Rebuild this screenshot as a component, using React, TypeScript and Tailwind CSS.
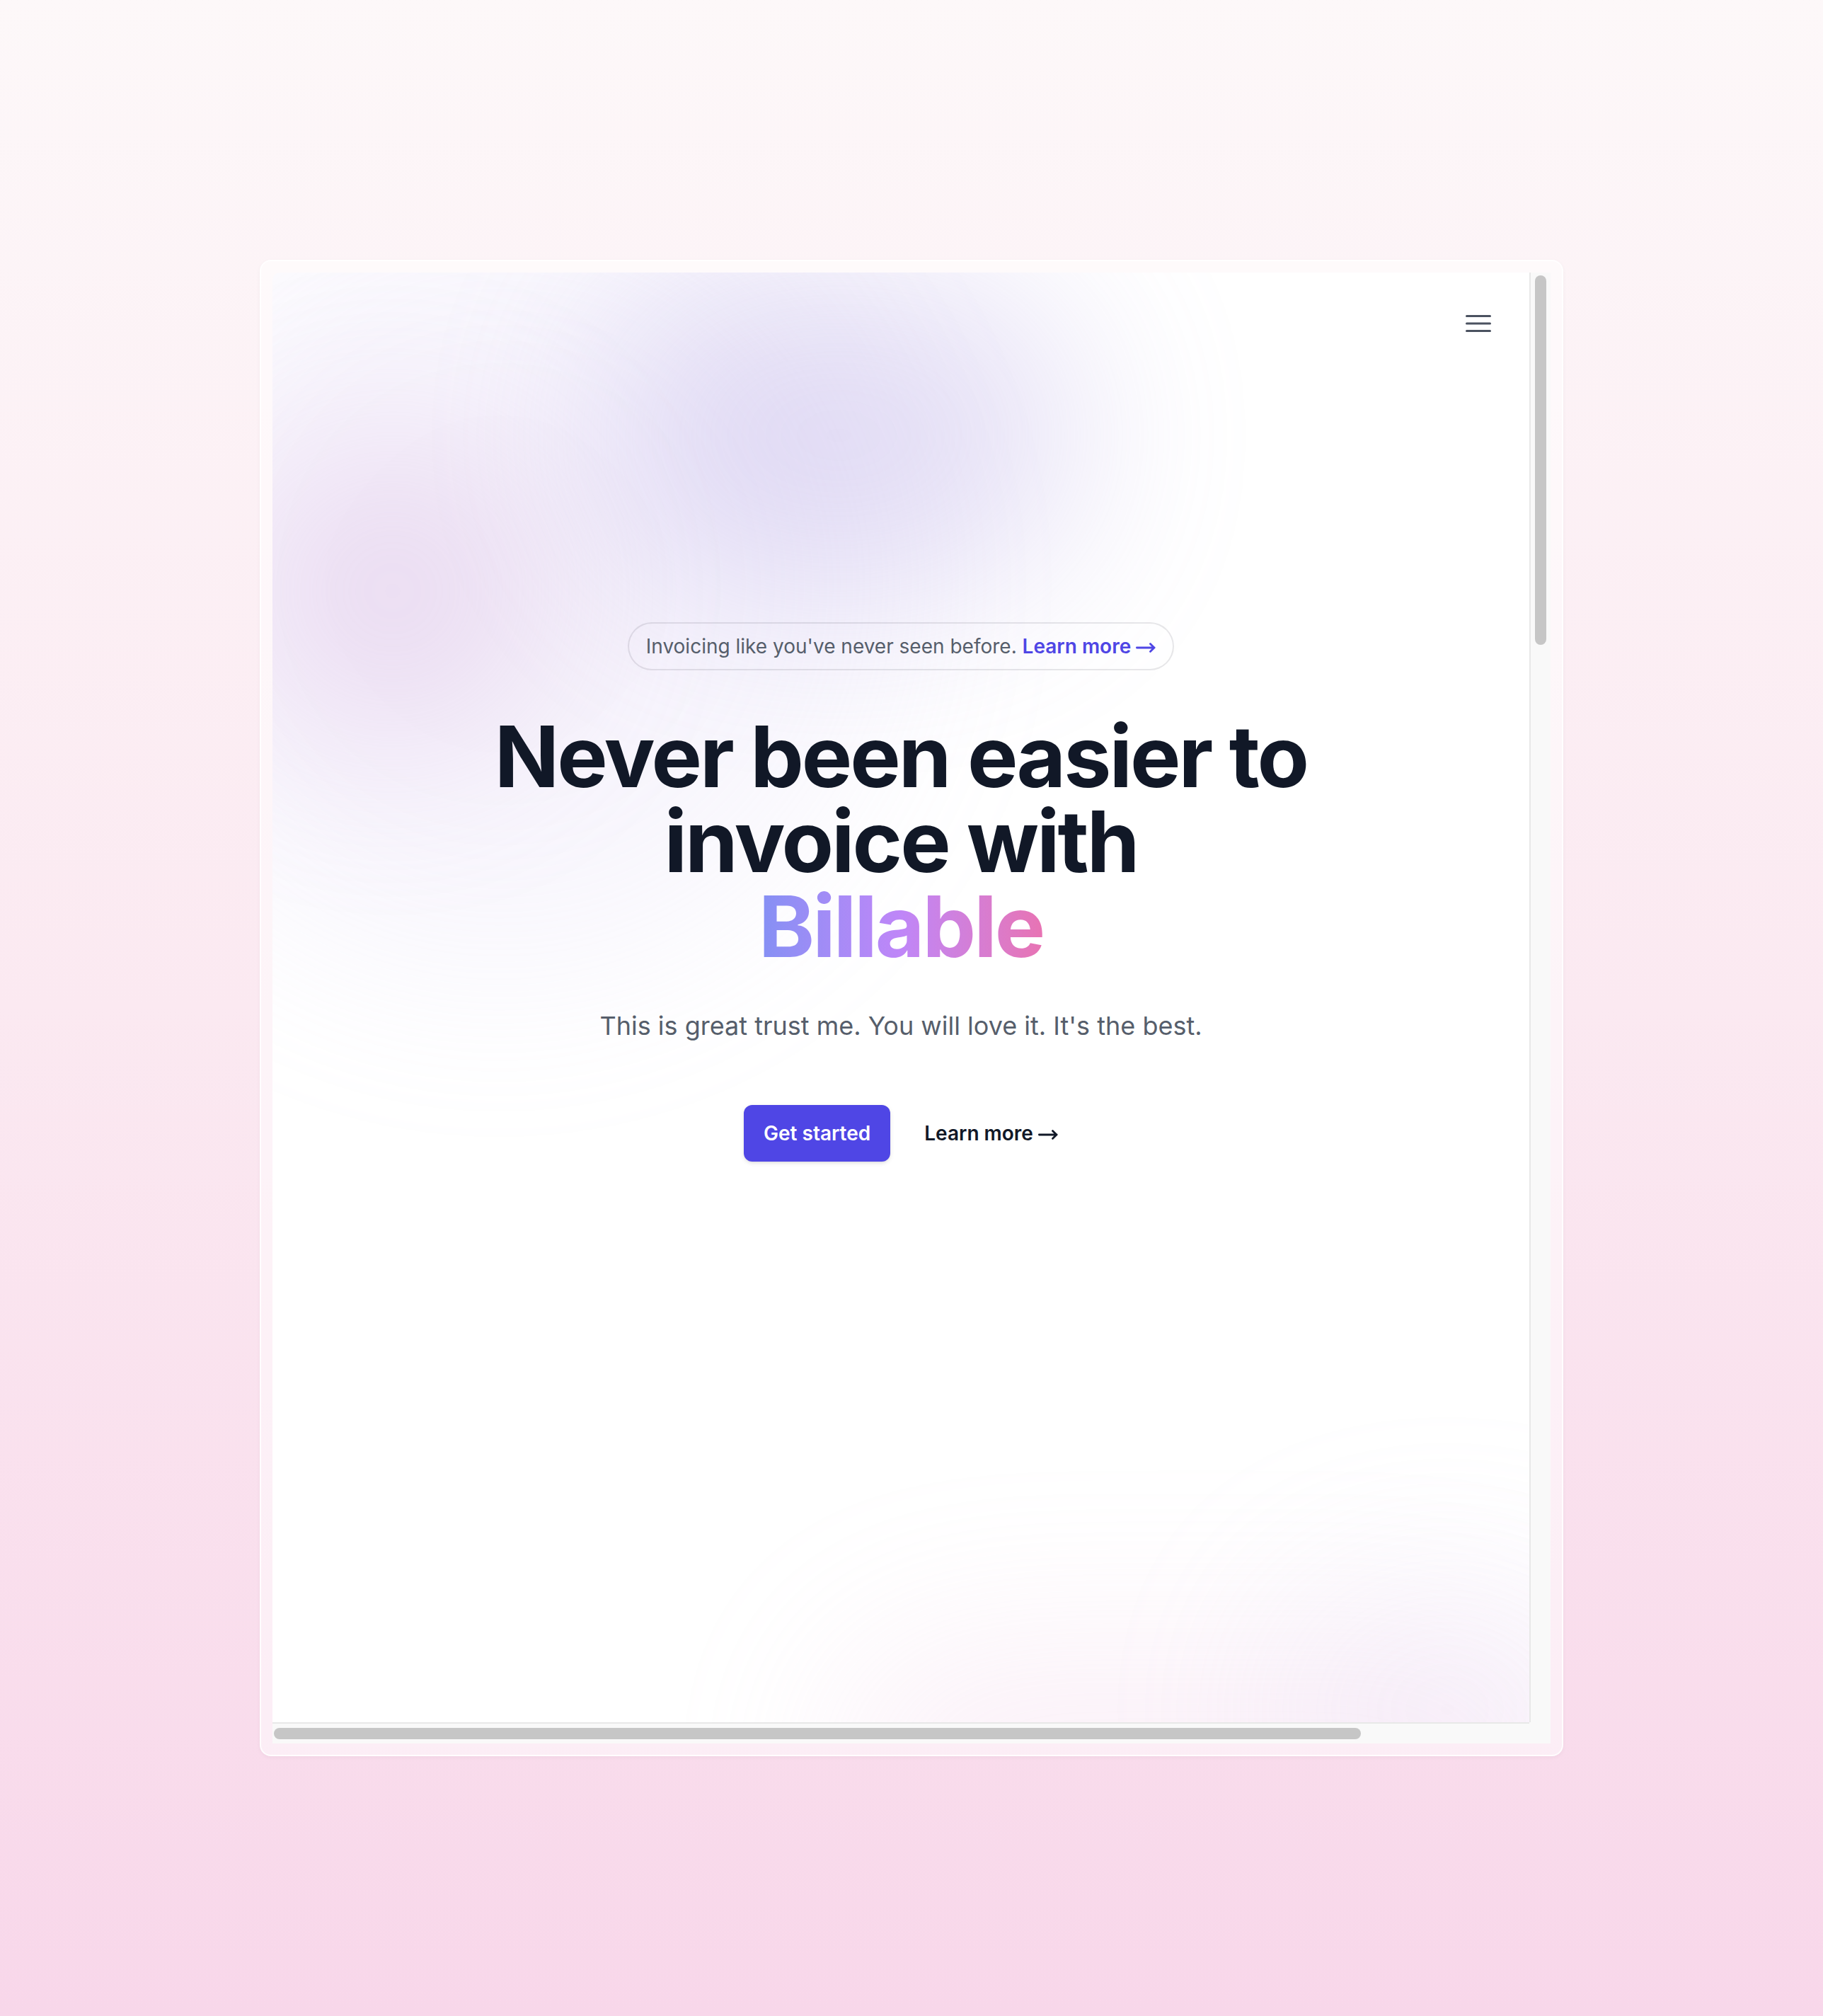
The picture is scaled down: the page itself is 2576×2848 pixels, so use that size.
import React from "react";

function MenuIcon() {
  return (
    <svg
      viewBox="0 0 24 24"
      fill="none"
      stroke="currentColor"
      strokeWidth={1.5}
      className="h-6 w-6"
      aria-hidden="true"
    >
      <path
        strokeLinecap="round"
        strokeLinejoin="round"
        d="M3.75 6.75h16.5M3.75 12h16.5m-16.5 5.25h16.5"
      />
    </svg>
  );
}

// long thin arrow used after the "Learn more" links
function Arrow() {
  return (
    <svg
      viewBox="0 0 14 8"
      fill="none"
      stroke="currentColor"
      strokeWidth={1.4}
      className="inline-block h-2 w-[14px]"
      aria-hidden="true"
    >
      <path strokeLinecap="round" strokeLinejoin="round" d="M0.7 4h12.4M10.2 1.3 13 4l-2.8 2.7" />
    </svg>
  );
}

function Hero() {
  return (
    <div className="relative isolate h-full overflow-hidden rounded-tl-[5px] bg-white px-6 pt-14">
      {/* header */}
      <header className="absolute inset-x-0 top-0 z-50">
        <nav className="flex items-center justify-end p-6">
          <button type="button" aria-label="Open main menu" className="inline-flex items-center justify-center rounded-md text-[#4b5260]">
            <MenuIcon />
          </button>
        </nav>
      </header>

      {/* background blobs */}
      <div aria-hidden="true" className="absolute -left-[120px] -top-[60px] -z-10 h-[560px] w-[560px] rounded-full bg-[#cfc3f0] opacity-15 blur-3xl" />
      <div aria-hidden="true" className="absolute left-[230px] top-0 -z-10 h-[230px] w-[340px] rounded-full bg-[#a897e0] opacity-30 blur-3xl" />
      <div aria-hidden="true" className="absolute -left-[30px] top-[115px] -z-10 h-[220px] w-[230px] rounded-full bg-[#cc9ed8] opacity-30 blur-3xl" />
      <div aria-hidden="true" className="absolute left-[400px] top-[970px] -z-10 h-[170px] w-[520px] rounded-full bg-[#eab6dc] opacity-20 blur-3xl" />
      <div aria-hidden="true" className="absolute left-[700px] top-[920px] -z-10 h-[190px] w-[260px] rounded-full bg-[#d6c4ee] opacity-15 blur-3xl" />

      <div className="mx-auto max-w-2xl py-48">
        {/* announcement pill */}
        <div className="mb-8 flex justify-center">
          <div className="relative rounded-full px-3 py-1 text-sm leading-6 text-[#565e6b] ring-1 ring-[#111827]/10">
            Invoicing like you've never seen before.{" "}
            <a href="#" className="font-semibold text-[#4f46e5]">
              Learn more <Arrow />
            </a>
          </div>
        </div>

        <div className="text-center">
          <h1 className="text-6xl font-bold tracking-tight text-[#111827]">
            Never been easier to invoice with
            <span className="mx-auto block w-fit bg-linear-to-r from-[#8490f4] via-[#bf86f8] to-[#e873b3] bg-clip-text text-transparent">
              Billable
            </span>
          </h1>
          <p className="mt-6 text-lg leading-8 text-[#565e6b]">
            This is great trust me. You will love it. It's the best.
          </p>
          <div className="mt-10 flex items-center justify-center gap-x-6">
            <a
              href="#"
              className="rounded-md bg-[#4f46e5] px-3.5 py-2.5 text-sm font-semibold text-white shadow-sm"
            >
              Get started
            </a>
            <a href="#" className="text-sm font-semibold leading-6 text-[#111827]">
              Learn more <Arrow />
            </a>
          </div>
        </div>
      </div>
    </div>
  );
}

export default function App() {
  return (
    <div className="flex h-[1424px] w-[1288px] items-center justify-center bg-linear-to-b from-[#fdf8f9] via-[#fbe9f1] to-[#f8d7ea] font-['Inter',sans-serif] [zoom:2]">
      {/* preview frame */}
      <div className="flex h-[1057px] w-[921px] rounded-lg border border-white/80 bg-white/50 p-2 shadow-[0_1px_3px_rgba(0,0,0,0.04)]">
        <div className="grid flex-1 grid-cols-[1fr_15px] grid-rows-[1fr_15px] overflow-hidden rounded-tl-[5px]">
          <Hero />
          {/* vertical scrollbar */}
          <div className="flex justify-center border-l border-[#e8e8e8] bg-[#f9f9f9]">
            <div className="mt-[2px] h-[261px] w-2 rounded-full bg-[#c6c6c6]" />
          </div>
          {/* horizontal scrollbar */}
          <div className="flex items-center border-t border-[#e8e8e8] bg-[#f9f9f9]">
            <div className="ml-[1px] h-2 w-[768px] rounded-full bg-[#c6c6c6]" />
          </div>
          <div className="bg-[#f9f9f9]" />
        </div>
      </div>
    </div>
  );
}
